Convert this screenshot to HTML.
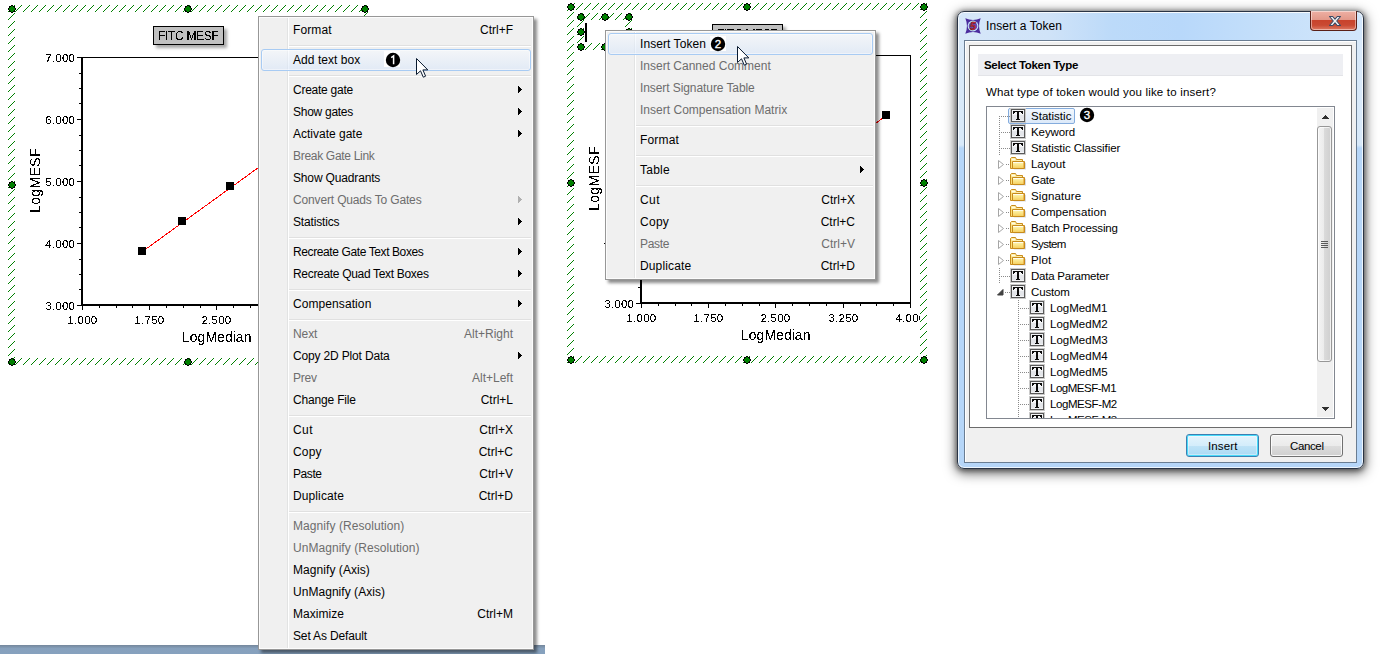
<!DOCTYPE html><html><head><meta charset="utf-8"><style>
html,body{margin:0;padding:0;}
body{width:1388px;height:654px;overflow:hidden;position:relative;background:#fff;font-family:'Liberation Sans', sans-serif;}
div{box-sizing:border-box;}
svg{position:absolute;left:0;top:0;overflow:visible;}
</style></head><body><svg width="1388" height="654"><defs><pattern id="h0" patternUnits="userSpaceOnUse" x="0" y="0" width="8" height="8"><g fill="#008000"><rect x="0" y="0" width="1" height="1"/><rect x="1" y="7" width="1" height="1"/><rect x="2" y="6" width="1" height="1"/><rect x="3" y="5" width="1" height="1"/><rect x="4" y="4" width="1" height="1"/><rect x="5" y="3" width="1" height="1"/><rect x="6" y="2" width="1" height="1"/><rect x="7" y="1" width="1" height="1"/></g></pattern><pattern id="h1" patternUnits="userSpaceOnUse" x="0" y="0" width="8" height="8"><g fill="#008000"><rect x="0" y="1" width="1" height="1"/><rect x="1" y="0" width="1" height="1"/><rect x="2" y="7" width="1" height="1"/><rect x="3" y="6" width="1" height="1"/><rect x="4" y="5" width="1" height="1"/><rect x="5" y="4" width="1" height="1"/><rect x="6" y="3" width="1" height="1"/><rect x="7" y="2" width="1" height="1"/></g></pattern><pattern id="h2" patternUnits="userSpaceOnUse" x="0" y="0" width="8" height="8"><g fill="#008000"><rect x="0" y="2" width="1" height="1"/><rect x="1" y="1" width="1" height="1"/><rect x="2" y="0" width="1" height="1"/><rect x="3" y="7" width="1" height="1"/><rect x="4" y="6" width="1" height="1"/><rect x="5" y="5" width="1" height="1"/><rect x="6" y="4" width="1" height="1"/><rect x="7" y="3" width="1" height="1"/></g></pattern><pattern id="h3" patternUnits="userSpaceOnUse" x="0" y="0" width="8" height="8"><g fill="#008000"><rect x="0" y="3" width="1" height="1"/><rect x="1" y="2" width="1" height="1"/><rect x="2" y="1" width="1" height="1"/><rect x="3" y="0" width="1" height="1"/><rect x="4" y="7" width="1" height="1"/><rect x="5" y="6" width="1" height="1"/><rect x="6" y="5" width="1" height="1"/><rect x="7" y="4" width="1" height="1"/></g></pattern><pattern id="h4" patternUnits="userSpaceOnUse" x="0" y="0" width="8" height="8"><g fill="#008000"><rect x="0" y="4" width="1" height="1"/><rect x="1" y="3" width="1" height="1"/><rect x="2" y="2" width="1" height="1"/><rect x="3" y="1" width="1" height="1"/><rect x="4" y="0" width="1" height="1"/><rect x="5" y="7" width="1" height="1"/><rect x="6" y="6" width="1" height="1"/><rect x="7" y="5" width="1" height="1"/></g></pattern><pattern id="h5" patternUnits="userSpaceOnUse" x="0" y="0" width="8" height="8"><g fill="#008000"><rect x="0" y="5" width="1" height="1"/><rect x="1" y="4" width="1" height="1"/><rect x="2" y="3" width="1" height="1"/><rect x="3" y="2" width="1" height="1"/><rect x="4" y="1" width="1" height="1"/><rect x="5" y="0" width="1" height="1"/><rect x="6" y="7" width="1" height="1"/><rect x="7" y="6" width="1" height="1"/></g></pattern><pattern id="h6" patternUnits="userSpaceOnUse" x="0" y="0" width="8" height="8"><g fill="#008000"><rect x="0" y="6" width="1" height="1"/><rect x="1" y="5" width="1" height="1"/><rect x="2" y="4" width="1" height="1"/><rect x="3" y="3" width="1" height="1"/><rect x="4" y="2" width="1" height="1"/><rect x="5" y="1" width="1" height="1"/><rect x="6" y="0" width="1" height="1"/><rect x="7" y="7" width="1" height="1"/></g></pattern><pattern id="h7" patternUnits="userSpaceOnUse" x="0" y="0" width="8" height="8"><g fill="#008000"><rect x="0" y="7" width="1" height="1"/><rect x="1" y="6" width="1" height="1"/><rect x="2" y="5" width="1" height="1"/><rect x="3" y="4" width="1" height="1"/><rect x="4" y="3" width="1" height="1"/><rect x="5" y="2" width="1" height="1"/><rect x="6" y="1" width="1" height="1"/><rect x="7" y="0" width="1" height="1"/></g></pattern></defs><clipPath id="cA"><rect x="15" y="12" width="346" height="346"/></clipPath><g clip-path="url(#cA)" shape-rendering="crispEdges"><rect x="81" y="57" width="271" height="1" fill="#000"/><rect x="351" y="57" width="1" height="249" fill="#000"/><rect x="81" y="57" width="2" height="249" fill="#000"/><rect x="81" y="304" width="271" height="2" fill="#000"/><rect x="77" y="57" width="4" height="1" fill="#000"/><rect x="79" y="73" width="2" height="1" fill="#000"/><rect x="79" y="88" width="2" height="1" fill="#000"/><rect x="79" y="103" width="2" height="1" fill="#000"/><rect x="77" y="119" width="4" height="1" fill="#000"/><rect x="79" y="135" width="2" height="1" fill="#000"/><rect x="79" y="150" width="2" height="1" fill="#000"/><rect x="79" y="165" width="2" height="1" fill="#000"/><rect x="77" y="181" width="4" height="1" fill="#000"/><rect x="79" y="197" width="2" height="1" fill="#000"/><rect x="79" y="212" width="2" height="1" fill="#000"/><rect x="79" y="227" width="2" height="1" fill="#000"/><rect x="77" y="243" width="4" height="1" fill="#000"/><rect x="79" y="259" width="2" height="1" fill="#000"/><rect x="79" y="274" width="2" height="1" fill="#000"/><rect x="79" y="289" width="2" height="1" fill="#000"/><rect x="77" y="305" width="4" height="1" fill="#000"/><rect x="82" y="306" width="1" height="4" fill="#000"/><rect x="99" y="306" width="1" height="2" fill="#000"/><rect x="116" y="306" width="1" height="2" fill="#000"/><rect x="132" y="306" width="1" height="2" fill="#000"/><rect x="149" y="306" width="1" height="4" fill="#000"/><rect x="166" y="306" width="1" height="2" fill="#000"/><rect x="183" y="306" width="1" height="2" fill="#000"/><rect x="200" y="306" width="1" height="2" fill="#000"/><rect x="216" y="306" width="1" height="4" fill="#000"/><rect x="233" y="306" width="1" height="2" fill="#000"/><rect x="250" y="306" width="1" height="2" fill="#000"/><rect x="267" y="306" width="1" height="2" fill="#000"/><rect x="284" y="306" width="1" height="4" fill="#000"/><rect x="301" y="306" width="1" height="2" fill="#000"/><rect x="317" y="306" width="1" height="2" fill="#000"/><rect x="334" y="306" width="1" height="2" fill="#000"/><rect x="351" y="306" width="1" height="4" fill="#000"/></g><g clip-path="url(#cA)"><line x1="142.5" y1="251.5" x2="327.5" y2="117.5" stroke="#ff0000" stroke-width="1" shape-rendering="crispEdges"/><rect x="138" y="247" width="8" height="8" fill="#000" shape-rendering="crispEdges"/><rect x="178" y="217" width="8" height="8" fill="#000" shape-rendering="crispEdges"/><rect x="226" y="182" width="8" height="8" fill="#000" shape-rendering="crispEdges"/><rect x="275" y="147" width="8" height="8" fill="#000" shape-rendering="crispEdges"/><rect x="323" y="113" width="8" height="8" fill="#000" shape-rendering="crispEdges"/></g><g shape-rendering="crispEdges"><rect x="8" y="5" width="7" height="360" fill="url(#h3)"/><rect x="361" y="5" width="7" height="360" fill="url(#h3)"/><rect x="15" y="5" width="346" height="7" fill="url(#h2)"/><rect x="15" y="358" width="346" height="7" fill="url(#h3)"/><path d="M11 5h1v1h-1zM12 5h1v1h-1zM9 6h1v1h-1zM10 6h1v1h-1zM13 6h1v1h-1zM14 6h1v1h-1zM9 7h1v1h-1zM14 7h1v1h-1zM8 8h1v1h-1zM15 8h1v1h-1zM8 9h1v1h-1zM15 9h1v1h-1zM9 10h1v1h-1zM14 10h1v1h-1zM9 11h1v1h-1zM10 11h1v1h-1zM13 11h1v1h-1zM14 11h1v1h-1zM11 12h1v1h-1zM12 12h1v1h-1z" fill="#000"/><path d="M11 6h1v1h-1zM12 6h1v1h-1zM10 7h1v1h-1zM11 7h1v1h-1zM12 7h1v1h-1zM13 7h1v1h-1zM9 8h1v1h-1zM10 8h1v1h-1zM11 8h1v1h-1zM12 8h1v1h-1zM13 8h1v1h-1zM14 8h1v1h-1zM9 9h1v1h-1zM10 9h1v1h-1zM11 9h1v1h-1zM12 9h1v1h-1zM13 9h1v1h-1zM14 9h1v1h-1zM10 10h1v1h-1zM11 10h1v1h-1zM12 10h1v1h-1zM13 10h1v1h-1zM11 11h1v1h-1zM12 11h1v1h-1z" fill="#008000"/><path d="M187 5h1v1h-1zM188 5h1v1h-1zM185 6h1v1h-1zM186 6h1v1h-1zM189 6h1v1h-1zM190 6h1v1h-1zM185 7h1v1h-1zM190 7h1v1h-1zM184 8h1v1h-1zM191 8h1v1h-1zM184 9h1v1h-1zM191 9h1v1h-1zM185 10h1v1h-1zM190 10h1v1h-1zM185 11h1v1h-1zM186 11h1v1h-1zM189 11h1v1h-1zM190 11h1v1h-1zM187 12h1v1h-1zM188 12h1v1h-1z" fill="#000"/><path d="M187 6h1v1h-1zM188 6h1v1h-1zM186 7h1v1h-1zM187 7h1v1h-1zM188 7h1v1h-1zM189 7h1v1h-1zM185 8h1v1h-1zM186 8h1v1h-1zM187 8h1v1h-1zM188 8h1v1h-1zM189 8h1v1h-1zM190 8h1v1h-1zM185 9h1v1h-1zM186 9h1v1h-1zM187 9h1v1h-1zM188 9h1v1h-1zM189 9h1v1h-1zM190 9h1v1h-1zM186 10h1v1h-1zM187 10h1v1h-1zM188 10h1v1h-1zM189 10h1v1h-1zM187 11h1v1h-1zM188 11h1v1h-1z" fill="#008000"/><path d="M364 5h1v1h-1zM365 5h1v1h-1zM362 6h1v1h-1zM363 6h1v1h-1zM366 6h1v1h-1zM367 6h1v1h-1zM362 7h1v1h-1zM367 7h1v1h-1zM361 8h1v1h-1zM368 8h1v1h-1zM361 9h1v1h-1zM368 9h1v1h-1zM362 10h1v1h-1zM367 10h1v1h-1zM362 11h1v1h-1zM363 11h1v1h-1zM366 11h1v1h-1zM367 11h1v1h-1zM364 12h1v1h-1zM365 12h1v1h-1z" fill="#000"/><path d="M364 6h1v1h-1zM365 6h1v1h-1zM363 7h1v1h-1zM364 7h1v1h-1zM365 7h1v1h-1zM366 7h1v1h-1zM362 8h1v1h-1zM363 8h1v1h-1zM364 8h1v1h-1zM365 8h1v1h-1zM366 8h1v1h-1zM367 8h1v1h-1zM362 9h1v1h-1zM363 9h1v1h-1zM364 9h1v1h-1zM365 9h1v1h-1zM366 9h1v1h-1zM367 9h1v1h-1zM363 10h1v1h-1zM364 10h1v1h-1zM365 10h1v1h-1zM366 10h1v1h-1zM364 11h1v1h-1zM365 11h1v1h-1z" fill="#008000"/><path d="M11 181h1v1h-1zM12 181h1v1h-1zM9 182h1v1h-1zM10 182h1v1h-1zM13 182h1v1h-1zM14 182h1v1h-1zM9 183h1v1h-1zM14 183h1v1h-1zM8 184h1v1h-1zM15 184h1v1h-1zM8 185h1v1h-1zM15 185h1v1h-1zM9 186h1v1h-1zM14 186h1v1h-1zM9 187h1v1h-1zM10 187h1v1h-1zM13 187h1v1h-1zM14 187h1v1h-1zM11 188h1v1h-1zM12 188h1v1h-1z" fill="#000"/><path d="M11 182h1v1h-1zM12 182h1v1h-1zM10 183h1v1h-1zM11 183h1v1h-1zM12 183h1v1h-1zM13 183h1v1h-1zM9 184h1v1h-1zM10 184h1v1h-1zM11 184h1v1h-1zM12 184h1v1h-1zM13 184h1v1h-1zM14 184h1v1h-1zM9 185h1v1h-1zM10 185h1v1h-1zM11 185h1v1h-1zM12 185h1v1h-1zM13 185h1v1h-1zM14 185h1v1h-1zM10 186h1v1h-1zM11 186h1v1h-1zM12 186h1v1h-1zM13 186h1v1h-1zM11 187h1v1h-1zM12 187h1v1h-1z" fill="#008000"/><path d="M364 181h1v1h-1zM365 181h1v1h-1zM362 182h1v1h-1zM363 182h1v1h-1zM366 182h1v1h-1zM367 182h1v1h-1zM362 183h1v1h-1zM367 183h1v1h-1zM361 184h1v1h-1zM368 184h1v1h-1zM361 185h1v1h-1zM368 185h1v1h-1zM362 186h1v1h-1zM367 186h1v1h-1zM362 187h1v1h-1zM363 187h1v1h-1zM366 187h1v1h-1zM367 187h1v1h-1zM364 188h1v1h-1zM365 188h1v1h-1z" fill="#000"/><path d="M364 182h1v1h-1zM365 182h1v1h-1zM363 183h1v1h-1zM364 183h1v1h-1zM365 183h1v1h-1zM366 183h1v1h-1zM362 184h1v1h-1zM363 184h1v1h-1zM364 184h1v1h-1zM365 184h1v1h-1zM366 184h1v1h-1zM367 184h1v1h-1zM362 185h1v1h-1zM363 185h1v1h-1zM364 185h1v1h-1zM365 185h1v1h-1zM366 185h1v1h-1zM367 185h1v1h-1zM363 186h1v1h-1zM364 186h1v1h-1zM365 186h1v1h-1zM366 186h1v1h-1zM364 187h1v1h-1zM365 187h1v1h-1z" fill="#008000"/><path d="M11 358h1v1h-1zM12 358h1v1h-1zM9 359h1v1h-1zM10 359h1v1h-1zM13 359h1v1h-1zM14 359h1v1h-1zM9 360h1v1h-1zM14 360h1v1h-1zM8 361h1v1h-1zM15 361h1v1h-1zM8 362h1v1h-1zM15 362h1v1h-1zM9 363h1v1h-1zM14 363h1v1h-1zM9 364h1v1h-1zM10 364h1v1h-1zM13 364h1v1h-1zM14 364h1v1h-1zM11 365h1v1h-1zM12 365h1v1h-1z" fill="#000"/><path d="M11 359h1v1h-1zM12 359h1v1h-1zM10 360h1v1h-1zM11 360h1v1h-1zM12 360h1v1h-1zM13 360h1v1h-1zM9 361h1v1h-1zM10 361h1v1h-1zM11 361h1v1h-1zM12 361h1v1h-1zM13 361h1v1h-1zM14 361h1v1h-1zM9 362h1v1h-1zM10 362h1v1h-1zM11 362h1v1h-1zM12 362h1v1h-1zM13 362h1v1h-1zM14 362h1v1h-1zM10 363h1v1h-1zM11 363h1v1h-1zM12 363h1v1h-1zM13 363h1v1h-1zM11 364h1v1h-1zM12 364h1v1h-1z" fill="#008000"/><path d="M187 358h1v1h-1zM188 358h1v1h-1zM185 359h1v1h-1zM186 359h1v1h-1zM189 359h1v1h-1zM190 359h1v1h-1zM185 360h1v1h-1zM190 360h1v1h-1zM184 361h1v1h-1zM191 361h1v1h-1zM184 362h1v1h-1zM191 362h1v1h-1zM185 363h1v1h-1zM190 363h1v1h-1zM185 364h1v1h-1zM186 364h1v1h-1zM189 364h1v1h-1zM190 364h1v1h-1zM187 365h1v1h-1zM188 365h1v1h-1z" fill="#000"/><path d="M187 359h1v1h-1zM188 359h1v1h-1zM186 360h1v1h-1zM187 360h1v1h-1zM188 360h1v1h-1zM189 360h1v1h-1zM185 361h1v1h-1zM186 361h1v1h-1zM187 361h1v1h-1zM188 361h1v1h-1zM189 361h1v1h-1zM190 361h1v1h-1zM185 362h1v1h-1zM186 362h1v1h-1zM187 362h1v1h-1zM188 362h1v1h-1zM189 362h1v1h-1zM190 362h1v1h-1zM186 363h1v1h-1zM187 363h1v1h-1zM188 363h1v1h-1zM189 363h1v1h-1zM187 364h1v1h-1zM188 364h1v1h-1z" fill="#008000"/><path d="M364 358h1v1h-1zM365 358h1v1h-1zM362 359h1v1h-1zM363 359h1v1h-1zM366 359h1v1h-1zM367 359h1v1h-1zM362 360h1v1h-1zM367 360h1v1h-1zM361 361h1v1h-1zM368 361h1v1h-1zM361 362h1v1h-1zM368 362h1v1h-1zM362 363h1v1h-1zM367 363h1v1h-1zM362 364h1v1h-1zM363 364h1v1h-1zM366 364h1v1h-1zM367 364h1v1h-1zM364 365h1v1h-1zM365 365h1v1h-1z" fill="#000"/><path d="M364 359h1v1h-1zM365 359h1v1h-1zM363 360h1v1h-1zM364 360h1v1h-1zM365 360h1v1h-1zM366 360h1v1h-1zM362 361h1v1h-1zM363 361h1v1h-1zM364 361h1v1h-1zM365 361h1v1h-1zM366 361h1v1h-1zM367 361h1v1h-1zM362 362h1v1h-1zM363 362h1v1h-1zM364 362h1v1h-1zM365 362h1v1h-1zM366 362h1v1h-1zM367 362h1v1h-1zM363 363h1v1h-1zM364 363h1v1h-1zM365 363h1v1h-1zM366 363h1v1h-1zM364 364h1v1h-1zM365 364h1v1h-1z" fill="#008000"/></g><clipPath id="cB"><rect x="574" y="10" width="346" height="346"/></clipPath><g clip-path="url(#cB)" shape-rendering="crispEdges"><rect x="640" y="55" width="271" height="1" fill="#000"/><rect x="910" y="55" width="1" height="249" fill="#000"/><rect x="640" y="55" width="2" height="249" fill="#000"/><rect x="640" y="302" width="271" height="2" fill="#000"/><rect x="636" y="55" width="4" height="1" fill="#000"/><rect x="638" y="71" width="2" height="1" fill="#000"/><rect x="638" y="86" width="2" height="1" fill="#000"/><rect x="638" y="101" width="2" height="1" fill="#000"/><rect x="636" y="117" width="4" height="1" fill="#000"/><rect x="638" y="133" width="2" height="1" fill="#000"/><rect x="638" y="148" width="2" height="1" fill="#000"/><rect x="638" y="163" width="2" height="1" fill="#000"/><rect x="636" y="179" width="4" height="1" fill="#000"/><rect x="638" y="195" width="2" height="1" fill="#000"/><rect x="638" y="210" width="2" height="1" fill="#000"/><rect x="638" y="225" width="2" height="1" fill="#000"/><rect x="636" y="241" width="4" height="1" fill="#000"/><rect x="638" y="257" width="2" height="1" fill="#000"/><rect x="638" y="272" width="2" height="1" fill="#000"/><rect x="638" y="287" width="2" height="1" fill="#000"/><rect x="636" y="303" width="4" height="1" fill="#000"/><rect x="641" y="304" width="1" height="4" fill="#000"/><rect x="658" y="304" width="1" height="2" fill="#000"/><rect x="675" y="304" width="1" height="2" fill="#000"/><rect x="691" y="304" width="1" height="2" fill="#000"/><rect x="708" y="304" width="1" height="4" fill="#000"/><rect x="725" y="304" width="1" height="2" fill="#000"/><rect x="742" y="304" width="1" height="2" fill="#000"/><rect x="759" y="304" width="1" height="2" fill="#000"/><rect x="775" y="304" width="1" height="4" fill="#000"/><rect x="792" y="304" width="1" height="2" fill="#000"/><rect x="809" y="304" width="1" height="2" fill="#000"/><rect x="826" y="304" width="1" height="2" fill="#000"/><rect x="843" y="304" width="1" height="4" fill="#000"/><rect x="860" y="304" width="1" height="2" fill="#000"/><rect x="876" y="304" width="1" height="2" fill="#000"/><rect x="893" y="304" width="1" height="2" fill="#000"/><rect x="910" y="304" width="1" height="4" fill="#000"/></g><g clip-path="url(#cB)"><line x1="701.5" y1="249.5" x2="886.5" y2="115.5" stroke="#ff0000" stroke-width="1" shape-rendering="crispEdges"/><rect x="697" y="245" width="8" height="8" fill="#000" shape-rendering="crispEdges"/><rect x="737" y="215" width="8" height="8" fill="#000" shape-rendering="crispEdges"/><rect x="785" y="180" width="8" height="8" fill="#000" shape-rendering="crispEdges"/><rect x="834" y="145" width="8" height="8" fill="#000" shape-rendering="crispEdges"/><rect x="882" y="111" width="8" height="8" fill="#000" shape-rendering="crispEdges"/></g><g shape-rendering="crispEdges"><rect x="567" y="3" width="7" height="360" fill="url(#h1)"/><rect x="920" y="3" width="7" height="360" fill="url(#h1)"/><rect x="574" y="3" width="346" height="7" fill="url(#h1)"/><rect x="574" y="356" width="346" height="7" fill="url(#h1)"/><path d="M570 3h1v1h-1zM571 3h1v1h-1zM568 4h1v1h-1zM569 4h1v1h-1zM572 4h1v1h-1zM573 4h1v1h-1zM568 5h1v1h-1zM573 5h1v1h-1zM567 6h1v1h-1zM574 6h1v1h-1zM567 7h1v1h-1zM574 7h1v1h-1zM568 8h1v1h-1zM573 8h1v1h-1zM568 9h1v1h-1zM569 9h1v1h-1zM572 9h1v1h-1zM573 9h1v1h-1zM570 10h1v1h-1zM571 10h1v1h-1z" fill="#000"/><path d="M570 4h1v1h-1zM571 4h1v1h-1zM569 5h1v1h-1zM570 5h1v1h-1zM571 5h1v1h-1zM572 5h1v1h-1zM568 6h1v1h-1zM569 6h1v1h-1zM570 6h1v1h-1zM571 6h1v1h-1zM572 6h1v1h-1zM573 6h1v1h-1zM568 7h1v1h-1zM569 7h1v1h-1zM570 7h1v1h-1zM571 7h1v1h-1zM572 7h1v1h-1zM573 7h1v1h-1zM569 8h1v1h-1zM570 8h1v1h-1zM571 8h1v1h-1zM572 8h1v1h-1zM570 9h1v1h-1zM571 9h1v1h-1z" fill="#008000"/><path d="M746 3h1v1h-1zM747 3h1v1h-1zM744 4h1v1h-1zM745 4h1v1h-1zM748 4h1v1h-1zM749 4h1v1h-1zM744 5h1v1h-1zM749 5h1v1h-1zM743 6h1v1h-1zM750 6h1v1h-1zM743 7h1v1h-1zM750 7h1v1h-1zM744 8h1v1h-1zM749 8h1v1h-1zM744 9h1v1h-1zM745 9h1v1h-1zM748 9h1v1h-1zM749 9h1v1h-1zM746 10h1v1h-1zM747 10h1v1h-1z" fill="#000"/><path d="M746 4h1v1h-1zM747 4h1v1h-1zM745 5h1v1h-1zM746 5h1v1h-1zM747 5h1v1h-1zM748 5h1v1h-1zM744 6h1v1h-1zM745 6h1v1h-1zM746 6h1v1h-1zM747 6h1v1h-1zM748 6h1v1h-1zM749 6h1v1h-1zM744 7h1v1h-1zM745 7h1v1h-1zM746 7h1v1h-1zM747 7h1v1h-1zM748 7h1v1h-1zM749 7h1v1h-1zM745 8h1v1h-1zM746 8h1v1h-1zM747 8h1v1h-1zM748 8h1v1h-1zM746 9h1v1h-1zM747 9h1v1h-1z" fill="#008000"/><path d="M923 3h1v1h-1zM924 3h1v1h-1zM921 4h1v1h-1zM922 4h1v1h-1zM925 4h1v1h-1zM926 4h1v1h-1zM921 5h1v1h-1zM926 5h1v1h-1zM920 6h1v1h-1zM927 6h1v1h-1zM920 7h1v1h-1zM927 7h1v1h-1zM921 8h1v1h-1zM926 8h1v1h-1zM921 9h1v1h-1zM922 9h1v1h-1zM925 9h1v1h-1zM926 9h1v1h-1zM923 10h1v1h-1zM924 10h1v1h-1z" fill="#000"/><path d="M923 4h1v1h-1zM924 4h1v1h-1zM922 5h1v1h-1zM923 5h1v1h-1zM924 5h1v1h-1zM925 5h1v1h-1zM921 6h1v1h-1zM922 6h1v1h-1zM923 6h1v1h-1zM924 6h1v1h-1zM925 6h1v1h-1zM926 6h1v1h-1zM921 7h1v1h-1zM922 7h1v1h-1zM923 7h1v1h-1zM924 7h1v1h-1zM925 7h1v1h-1zM926 7h1v1h-1zM922 8h1v1h-1zM923 8h1v1h-1zM924 8h1v1h-1zM925 8h1v1h-1zM923 9h1v1h-1zM924 9h1v1h-1z" fill="#008000"/><path d="M570 179h1v1h-1zM571 179h1v1h-1zM568 180h1v1h-1zM569 180h1v1h-1zM572 180h1v1h-1zM573 180h1v1h-1zM568 181h1v1h-1zM573 181h1v1h-1zM567 182h1v1h-1zM574 182h1v1h-1zM567 183h1v1h-1zM574 183h1v1h-1zM568 184h1v1h-1zM573 184h1v1h-1zM568 185h1v1h-1zM569 185h1v1h-1zM572 185h1v1h-1zM573 185h1v1h-1zM570 186h1v1h-1zM571 186h1v1h-1z" fill="#000"/><path d="M570 180h1v1h-1zM571 180h1v1h-1zM569 181h1v1h-1zM570 181h1v1h-1zM571 181h1v1h-1zM572 181h1v1h-1zM568 182h1v1h-1zM569 182h1v1h-1zM570 182h1v1h-1zM571 182h1v1h-1zM572 182h1v1h-1zM573 182h1v1h-1zM568 183h1v1h-1zM569 183h1v1h-1zM570 183h1v1h-1zM571 183h1v1h-1zM572 183h1v1h-1zM573 183h1v1h-1zM569 184h1v1h-1zM570 184h1v1h-1zM571 184h1v1h-1zM572 184h1v1h-1zM570 185h1v1h-1zM571 185h1v1h-1z" fill="#008000"/><path d="M923 179h1v1h-1zM924 179h1v1h-1zM921 180h1v1h-1zM922 180h1v1h-1zM925 180h1v1h-1zM926 180h1v1h-1zM921 181h1v1h-1zM926 181h1v1h-1zM920 182h1v1h-1zM927 182h1v1h-1zM920 183h1v1h-1zM927 183h1v1h-1zM921 184h1v1h-1zM926 184h1v1h-1zM921 185h1v1h-1zM922 185h1v1h-1zM925 185h1v1h-1zM926 185h1v1h-1zM923 186h1v1h-1zM924 186h1v1h-1z" fill="#000"/><path d="M923 180h1v1h-1zM924 180h1v1h-1zM922 181h1v1h-1zM923 181h1v1h-1zM924 181h1v1h-1zM925 181h1v1h-1zM921 182h1v1h-1zM922 182h1v1h-1zM923 182h1v1h-1zM924 182h1v1h-1zM925 182h1v1h-1zM926 182h1v1h-1zM921 183h1v1h-1zM922 183h1v1h-1zM923 183h1v1h-1zM924 183h1v1h-1zM925 183h1v1h-1zM926 183h1v1h-1zM922 184h1v1h-1zM923 184h1v1h-1zM924 184h1v1h-1zM925 184h1v1h-1zM923 185h1v1h-1zM924 185h1v1h-1z" fill="#008000"/><path d="M570 356h1v1h-1zM571 356h1v1h-1zM568 357h1v1h-1zM569 357h1v1h-1zM572 357h1v1h-1zM573 357h1v1h-1zM568 358h1v1h-1zM573 358h1v1h-1zM567 359h1v1h-1zM574 359h1v1h-1zM567 360h1v1h-1zM574 360h1v1h-1zM568 361h1v1h-1zM573 361h1v1h-1zM568 362h1v1h-1zM569 362h1v1h-1zM572 362h1v1h-1zM573 362h1v1h-1zM570 363h1v1h-1zM571 363h1v1h-1z" fill="#000"/><path d="M570 357h1v1h-1zM571 357h1v1h-1zM569 358h1v1h-1zM570 358h1v1h-1zM571 358h1v1h-1zM572 358h1v1h-1zM568 359h1v1h-1zM569 359h1v1h-1zM570 359h1v1h-1zM571 359h1v1h-1zM572 359h1v1h-1zM573 359h1v1h-1zM568 360h1v1h-1zM569 360h1v1h-1zM570 360h1v1h-1zM571 360h1v1h-1zM572 360h1v1h-1zM573 360h1v1h-1zM569 361h1v1h-1zM570 361h1v1h-1zM571 361h1v1h-1zM572 361h1v1h-1zM570 362h1v1h-1zM571 362h1v1h-1z" fill="#008000"/><path d="M746 356h1v1h-1zM747 356h1v1h-1zM744 357h1v1h-1zM745 357h1v1h-1zM748 357h1v1h-1zM749 357h1v1h-1zM744 358h1v1h-1zM749 358h1v1h-1zM743 359h1v1h-1zM750 359h1v1h-1zM743 360h1v1h-1zM750 360h1v1h-1zM744 361h1v1h-1zM749 361h1v1h-1zM744 362h1v1h-1zM745 362h1v1h-1zM748 362h1v1h-1zM749 362h1v1h-1zM746 363h1v1h-1zM747 363h1v1h-1z" fill="#000"/><path d="M746 357h1v1h-1zM747 357h1v1h-1zM745 358h1v1h-1zM746 358h1v1h-1zM747 358h1v1h-1zM748 358h1v1h-1zM744 359h1v1h-1zM745 359h1v1h-1zM746 359h1v1h-1zM747 359h1v1h-1zM748 359h1v1h-1zM749 359h1v1h-1zM744 360h1v1h-1zM745 360h1v1h-1zM746 360h1v1h-1zM747 360h1v1h-1zM748 360h1v1h-1zM749 360h1v1h-1zM745 361h1v1h-1zM746 361h1v1h-1zM747 361h1v1h-1zM748 361h1v1h-1zM746 362h1v1h-1zM747 362h1v1h-1z" fill="#008000"/><path d="M923 356h1v1h-1zM924 356h1v1h-1zM921 357h1v1h-1zM922 357h1v1h-1zM925 357h1v1h-1zM926 357h1v1h-1zM921 358h1v1h-1zM926 358h1v1h-1zM920 359h1v1h-1zM927 359h1v1h-1zM920 360h1v1h-1zM927 360h1v1h-1zM921 361h1v1h-1zM926 361h1v1h-1zM921 362h1v1h-1zM922 362h1v1h-1zM925 362h1v1h-1zM926 362h1v1h-1zM923 363h1v1h-1zM924 363h1v1h-1z" fill="#000"/><path d="M923 357h1v1h-1zM924 357h1v1h-1zM922 358h1v1h-1zM923 358h1v1h-1zM924 358h1v1h-1zM925 358h1v1h-1zM921 359h1v1h-1zM922 359h1v1h-1zM923 359h1v1h-1zM924 359h1v1h-1zM925 359h1v1h-1zM926 359h1v1h-1zM921 360h1v1h-1zM922 360h1v1h-1zM923 360h1v1h-1zM924 360h1v1h-1zM925 360h1v1h-1zM926 360h1v1h-1zM922 361h1v1h-1zM923 361h1v1h-1zM924 361h1v1h-1zM925 361h1v1h-1zM923 362h1v1h-1zM924 362h1v1h-1z" fill="#008000"/></g><g shape-rendering="crispEdges"><rect x="577" y="13" width="7" height="37" fill="url(#h3)"/><rect x="625" y="13" width="7" height="37" fill="url(#h3)"/><rect x="584" y="13" width="41" height="7" fill="url(#h2)"/><rect x="584" y="43" width="41" height="7" fill="url(#h2)"/><path d="M580 13h1v1h-1zM581 13h1v1h-1zM578 14h1v1h-1zM579 14h1v1h-1zM582 14h1v1h-1zM583 14h1v1h-1zM578 15h1v1h-1zM583 15h1v1h-1zM577 16h1v1h-1zM584 16h1v1h-1zM577 17h1v1h-1zM584 17h1v1h-1zM578 18h1v1h-1zM583 18h1v1h-1zM578 19h1v1h-1zM579 19h1v1h-1zM582 19h1v1h-1zM583 19h1v1h-1zM580 20h1v1h-1zM581 20h1v1h-1z" fill="#000"/><path d="M580 14h1v1h-1zM581 14h1v1h-1zM579 15h1v1h-1zM580 15h1v1h-1zM581 15h1v1h-1zM582 15h1v1h-1zM578 16h1v1h-1zM579 16h1v1h-1zM580 16h1v1h-1zM581 16h1v1h-1zM582 16h1v1h-1zM583 16h1v1h-1zM578 17h1v1h-1zM579 17h1v1h-1zM580 17h1v1h-1zM581 17h1v1h-1zM582 17h1v1h-1zM583 17h1v1h-1zM579 18h1v1h-1zM580 18h1v1h-1zM581 18h1v1h-1zM582 18h1v1h-1zM580 19h1v1h-1zM581 19h1v1h-1z" fill="#008000"/><path d="M604 13h1v1h-1zM605 13h1v1h-1zM602 14h1v1h-1zM603 14h1v1h-1zM606 14h1v1h-1zM607 14h1v1h-1zM602 15h1v1h-1zM607 15h1v1h-1zM601 16h1v1h-1zM608 16h1v1h-1zM601 17h1v1h-1zM608 17h1v1h-1zM602 18h1v1h-1zM607 18h1v1h-1zM602 19h1v1h-1zM603 19h1v1h-1zM606 19h1v1h-1zM607 19h1v1h-1zM604 20h1v1h-1zM605 20h1v1h-1z" fill="#000"/><path d="M604 14h1v1h-1zM605 14h1v1h-1zM603 15h1v1h-1zM604 15h1v1h-1zM605 15h1v1h-1zM606 15h1v1h-1zM602 16h1v1h-1zM603 16h1v1h-1zM604 16h1v1h-1zM605 16h1v1h-1zM606 16h1v1h-1zM607 16h1v1h-1zM602 17h1v1h-1zM603 17h1v1h-1zM604 17h1v1h-1zM605 17h1v1h-1zM606 17h1v1h-1zM607 17h1v1h-1zM603 18h1v1h-1zM604 18h1v1h-1zM605 18h1v1h-1zM606 18h1v1h-1zM604 19h1v1h-1zM605 19h1v1h-1z" fill="#008000"/><path d="M628 13h1v1h-1zM629 13h1v1h-1zM626 14h1v1h-1zM627 14h1v1h-1zM630 14h1v1h-1zM631 14h1v1h-1zM626 15h1v1h-1zM631 15h1v1h-1zM625 16h1v1h-1zM632 16h1v1h-1zM625 17h1v1h-1zM632 17h1v1h-1zM626 18h1v1h-1zM631 18h1v1h-1zM626 19h1v1h-1zM627 19h1v1h-1zM630 19h1v1h-1zM631 19h1v1h-1zM628 20h1v1h-1zM629 20h1v1h-1z" fill="#000"/><path d="M628 14h1v1h-1zM629 14h1v1h-1zM627 15h1v1h-1zM628 15h1v1h-1zM629 15h1v1h-1zM630 15h1v1h-1zM626 16h1v1h-1zM627 16h1v1h-1zM628 16h1v1h-1zM629 16h1v1h-1zM630 16h1v1h-1zM631 16h1v1h-1zM626 17h1v1h-1zM627 17h1v1h-1zM628 17h1v1h-1zM629 17h1v1h-1zM630 17h1v1h-1zM631 17h1v1h-1zM627 18h1v1h-1zM628 18h1v1h-1zM629 18h1v1h-1zM630 18h1v1h-1zM628 19h1v1h-1zM629 19h1v1h-1z" fill="#008000"/><path d="M580 28h1v1h-1zM581 28h1v1h-1zM578 29h1v1h-1zM579 29h1v1h-1zM582 29h1v1h-1zM583 29h1v1h-1zM578 30h1v1h-1zM583 30h1v1h-1zM577 31h1v1h-1zM584 31h1v1h-1zM577 32h1v1h-1zM584 32h1v1h-1zM578 33h1v1h-1zM583 33h1v1h-1zM578 34h1v1h-1zM579 34h1v1h-1zM582 34h1v1h-1zM583 34h1v1h-1zM580 35h1v1h-1zM581 35h1v1h-1z" fill="#000"/><path d="M580 29h1v1h-1zM581 29h1v1h-1zM579 30h1v1h-1zM580 30h1v1h-1zM581 30h1v1h-1zM582 30h1v1h-1zM578 31h1v1h-1zM579 31h1v1h-1zM580 31h1v1h-1zM581 31h1v1h-1zM582 31h1v1h-1zM583 31h1v1h-1zM578 32h1v1h-1zM579 32h1v1h-1zM580 32h1v1h-1zM581 32h1v1h-1zM582 32h1v1h-1zM583 32h1v1h-1zM579 33h1v1h-1zM580 33h1v1h-1zM581 33h1v1h-1zM582 33h1v1h-1zM580 34h1v1h-1zM581 34h1v1h-1z" fill="#008000"/><path d="M628 28h1v1h-1zM629 28h1v1h-1zM626 29h1v1h-1zM627 29h1v1h-1zM630 29h1v1h-1zM631 29h1v1h-1zM626 30h1v1h-1zM631 30h1v1h-1zM625 31h1v1h-1zM632 31h1v1h-1zM625 32h1v1h-1zM632 32h1v1h-1zM626 33h1v1h-1zM631 33h1v1h-1zM626 34h1v1h-1zM627 34h1v1h-1zM630 34h1v1h-1zM631 34h1v1h-1zM628 35h1v1h-1zM629 35h1v1h-1z" fill="#000"/><path d="M628 29h1v1h-1zM629 29h1v1h-1zM627 30h1v1h-1zM628 30h1v1h-1zM629 30h1v1h-1zM630 30h1v1h-1zM626 31h1v1h-1zM627 31h1v1h-1zM628 31h1v1h-1zM629 31h1v1h-1zM630 31h1v1h-1zM631 31h1v1h-1zM626 32h1v1h-1zM627 32h1v1h-1zM628 32h1v1h-1zM629 32h1v1h-1zM630 32h1v1h-1zM631 32h1v1h-1zM627 33h1v1h-1zM628 33h1v1h-1zM629 33h1v1h-1zM630 33h1v1h-1zM628 34h1v1h-1zM629 34h1v1h-1z" fill="#008000"/><path d="M580 43h1v1h-1zM581 43h1v1h-1zM578 44h1v1h-1zM579 44h1v1h-1zM582 44h1v1h-1zM583 44h1v1h-1zM578 45h1v1h-1zM583 45h1v1h-1zM577 46h1v1h-1zM584 46h1v1h-1zM577 47h1v1h-1zM584 47h1v1h-1zM578 48h1v1h-1zM583 48h1v1h-1zM578 49h1v1h-1zM579 49h1v1h-1zM582 49h1v1h-1zM583 49h1v1h-1zM580 50h1v1h-1zM581 50h1v1h-1z" fill="#000"/><path d="M580 44h1v1h-1zM581 44h1v1h-1zM579 45h1v1h-1zM580 45h1v1h-1zM581 45h1v1h-1zM582 45h1v1h-1zM578 46h1v1h-1zM579 46h1v1h-1zM580 46h1v1h-1zM581 46h1v1h-1zM582 46h1v1h-1zM583 46h1v1h-1zM578 47h1v1h-1zM579 47h1v1h-1zM580 47h1v1h-1zM581 47h1v1h-1zM582 47h1v1h-1zM583 47h1v1h-1zM579 48h1v1h-1zM580 48h1v1h-1zM581 48h1v1h-1zM582 48h1v1h-1zM580 49h1v1h-1zM581 49h1v1h-1z" fill="#008000"/><path d="M604 43h1v1h-1zM605 43h1v1h-1zM602 44h1v1h-1zM603 44h1v1h-1zM606 44h1v1h-1zM607 44h1v1h-1zM602 45h1v1h-1zM607 45h1v1h-1zM601 46h1v1h-1zM608 46h1v1h-1zM601 47h1v1h-1zM608 47h1v1h-1zM602 48h1v1h-1zM607 48h1v1h-1zM602 49h1v1h-1zM603 49h1v1h-1zM606 49h1v1h-1zM607 49h1v1h-1zM604 50h1v1h-1zM605 50h1v1h-1z" fill="#000"/><path d="M604 44h1v1h-1zM605 44h1v1h-1zM603 45h1v1h-1zM604 45h1v1h-1zM605 45h1v1h-1zM606 45h1v1h-1zM602 46h1v1h-1zM603 46h1v1h-1zM604 46h1v1h-1zM605 46h1v1h-1zM606 46h1v1h-1zM607 46h1v1h-1zM602 47h1v1h-1zM603 47h1v1h-1zM604 47h1v1h-1zM605 47h1v1h-1zM606 47h1v1h-1zM607 47h1v1h-1zM603 48h1v1h-1zM604 48h1v1h-1zM605 48h1v1h-1zM606 48h1v1h-1zM604 49h1v1h-1zM605 49h1v1h-1z" fill="#008000"/><path d="M628 43h1v1h-1zM629 43h1v1h-1zM626 44h1v1h-1zM627 44h1v1h-1zM630 44h1v1h-1zM631 44h1v1h-1zM626 45h1v1h-1zM631 45h1v1h-1zM625 46h1v1h-1zM632 46h1v1h-1zM625 47h1v1h-1zM632 47h1v1h-1zM626 48h1v1h-1zM631 48h1v1h-1zM626 49h1v1h-1zM627 49h1v1h-1zM630 49h1v1h-1zM631 49h1v1h-1zM628 50h1v1h-1zM629 50h1v1h-1z" fill="#000"/><path d="M628 44h1v1h-1zM629 44h1v1h-1zM627 45h1v1h-1zM628 45h1v1h-1zM629 45h1v1h-1zM630 45h1v1h-1zM626 46h1v1h-1zM627 46h1v1h-1zM628 46h1v1h-1zM629 46h1v1h-1zM630 46h1v1h-1zM631 46h1v1h-1zM626 47h1v1h-1zM627 47h1v1h-1zM628 47h1v1h-1zM629 47h1v1h-1zM630 47h1v1h-1zM631 47h1v1h-1zM627 48h1v1h-1zM628 48h1v1h-1zM629 48h1v1h-1zM630 48h1v1h-1zM628 49h1v1h-1zM629 49h1v1h-1z" fill="#008000"/></g><rect x="585" y="23" width="2" height="19" fill="#000" shape-rendering="crispEdges"/></svg><svg width="0" height="0" style="position:absolute"><defs><filter id="noaa" x="0" y="0" width="100%" height="100%" color-interpolation-filters="sRGB"><feComponentTransfer><feFuncA type="discrete" tableValues="0 0 0 0 0 0 0 0 0 1 1 1 1 1 1 1 1 1 1 1"/></feComponentTransfer></filter></defs></svg><div style="position:absolute;left:153px;top:26px;width:71px;height:19px;background:#c0c0c0;border:1px solid #000;box-shadow:3px 3px 3px rgba(0,0,0,0.35)"></div><div style="position:absolute;left:0;top:0;width:1388px;height:654px;filter:url(#noaa)"><div style="position:absolute;top:30px;font-size:12px;line-height:12px;color:#000;white-space:pre;letter-spacing:-0.314px;left:158px;">FITC MESF</div></div><div style="position:absolute;left:15px;top:12px;width:346px;height:346px;overflow:hidden;filter:url(#noaa)"><div style="position:absolute;top:41px;font-size:11.5px;line-height:11.5px;color:#000;white-space:pre;letter-spacing:0.244px;right:285.76px;text-align:right;">7.000</div><div style="position:absolute;top:103px;font-size:11.5px;line-height:11.5px;color:#000;white-space:pre;letter-spacing:0.244px;right:285.76px;text-align:right;">6.000</div><div style="position:absolute;top:165px;font-size:11.5px;line-height:11.5px;color:#000;white-space:pre;letter-spacing:0.244px;right:285.76px;text-align:right;">5.000</div><div style="position:absolute;top:227px;font-size:11.5px;line-height:11.5px;color:#000;white-space:pre;letter-spacing:0.244px;right:285.76px;text-align:right;">4.000</div><div style="position:absolute;top:289px;font-size:11.5px;line-height:11.5px;color:#000;white-space:pre;letter-spacing:0.244px;right:285.76px;text-align:right;">3.000</div><div style="position:absolute;top:303px;font-size:11.5px;line-height:11.5px;color:#000;white-space:pre;letter-spacing:0.244px;left:52.5px;">1.000</div><div style="position:absolute;top:303px;font-size:11.5px;line-height:11.5px;color:#000;white-space:pre;letter-spacing:0.244px;left:119.5px;">1.750</div><div style="position:absolute;top:303px;font-size:11.5px;line-height:11.5px;color:#000;white-space:pre;letter-spacing:0.244px;left:186.5px;">2.500</div><div style="position:absolute;top:303px;font-size:11.5px;line-height:11.5px;color:#000;white-space:pre;letter-spacing:0.244px;left:254.5px;">3.250</div><div style="position:absolute;top:303px;font-size:11.5px;line-height:11.5px;color:#000;white-space:pre;letter-spacing:0.244px;left:321.5px;">4.000</div><div style="position:absolute;top:318px;font-size:14px;line-height:14px;color:#000;white-space:pre;letter-spacing:0.024px;left:167px;">LogMedian</div><div style="position:absolute;top:201px;font-size:14px;line-height:14px;color:#000;white-space:pre;letter-spacing:0.393px;left:13px;transform:rotate(-90deg);transform-origin:0 0;">LogMESF</div></div><div style="position:absolute;left:712px;top:24px;width:71px;height:19px;background:#c0c0c0;border:1px solid #000;box-shadow:3px 3px 3px rgba(0,0,0,0.35)"></div><div style="position:absolute;left:0;top:0;width:1388px;height:654px;filter:url(#noaa)"><div style="position:absolute;top:28px;font-size:12px;line-height:12px;color:#000;white-space:pre;letter-spacing:-0.314px;left:717px;">FITC MESF</div></div><div style="position:absolute;left:574px;top:10px;width:346px;height:346px;overflow:hidden;filter:url(#noaa)"><div style="position:absolute;top:41px;font-size:11.5px;line-height:11.5px;color:#000;white-space:pre;letter-spacing:0.244px;right:285.76px;text-align:right;">7.000</div><div style="position:absolute;top:103px;font-size:11.5px;line-height:11.5px;color:#000;white-space:pre;letter-spacing:0.244px;right:285.76px;text-align:right;">6.000</div><div style="position:absolute;top:165px;font-size:11.5px;line-height:11.5px;color:#000;white-space:pre;letter-spacing:0.244px;right:285.76px;text-align:right;">5.000</div><div style="position:absolute;top:227px;font-size:11.5px;line-height:11.5px;color:#000;white-space:pre;letter-spacing:0.244px;right:285.76px;text-align:right;">4.000</div><div style="position:absolute;top:289px;font-size:11.5px;line-height:11.5px;color:#000;white-space:pre;letter-spacing:0.244px;right:285.76px;text-align:right;">3.000</div><div style="position:absolute;top:303px;font-size:11.5px;line-height:11.5px;color:#000;white-space:pre;letter-spacing:0.244px;left:52.5px;">1.000</div><div style="position:absolute;top:303px;font-size:11.5px;line-height:11.5px;color:#000;white-space:pre;letter-spacing:0.244px;left:119.5px;">1.750</div><div style="position:absolute;top:303px;font-size:11.5px;line-height:11.5px;color:#000;white-space:pre;letter-spacing:0.244px;left:186.5px;">2.500</div><div style="position:absolute;top:303px;font-size:11.5px;line-height:11.5px;color:#000;white-space:pre;letter-spacing:0.244px;left:254.5px;">3.250</div><div style="position:absolute;top:303px;font-size:11.5px;line-height:11.5px;color:#000;white-space:pre;letter-spacing:0.244px;left:321.5px;">4.000</div><div style="position:absolute;top:318px;font-size:14px;line-height:14px;color:#000;white-space:pre;letter-spacing:0.024px;left:167px;">LogMedian</div><div style="position:absolute;top:201px;font-size:14px;line-height:14px;color:#000;white-space:pre;letter-spacing:0.393px;left:13px;transform:rotate(-90deg);transform-origin:0 0;">LogMESF</div></div><div style="position:absolute;left:0;top:645px;width:545px;height:9px;background:linear-gradient(#74869b,#87a1bd 40%,#86a1be)"></div><div style="position:absolute;left:258px;top:16px;width:276px;height:634px;background:#f0f0f0;border:1px solid #979797;box-shadow:inset 0 0 0 1px #fcfcfc, 3px 3px 3px rgba(0,0,0,0.45)"></div><div style="position:absolute;left:287px;top:18px;width:1px;height:630px;background:#e2e3e3"></div><div style="position:absolute;left:288px;top:18px;width:1px;height:630px;background:#fff"></div><div style="position:absolute;top:24px;font-size:12px;line-height:12px;color:#000;white-space:pre;letter-spacing:0.097px;left:293px;">Format</div><div style="position:absolute;top:24px;font-size:12px;line-height:12px;color:#000;white-space:pre;right:875.00px;text-align:right;">Ctrl+F</div><div style="position:absolute;left:289px;top:45px;width:242px;height:1px;background:#e0e0e0"></div><div style="position:absolute;left:289px;top:46px;width:242px;height:1px;background:#fff"></div><div style="position:absolute;left:261px;top:49px;width:270px;height:22px;border:1px solid #a8cbf3;border-radius:3px;background:linear-gradient(rgba(246,250,255,0.55),rgba(214,229,250,0.55));box-shadow:inset 0 0 0 1px rgba(255,255,255,0.45)"></div><div style="position:absolute;top:54px;font-size:12px;line-height:12px;color:#000;white-space:pre;letter-spacing:0.057px;left:293px;">Add text box</div><div style="position:absolute;left:289px;top:75px;width:242px;height:1px;background:#e0e0e0"></div><div style="position:absolute;left:289px;top:76px;width:242px;height:1px;background:#fff"></div><div style="position:absolute;top:84px;font-size:12px;line-height:12px;color:#000;white-space:pre;letter-spacing:-0.247px;left:293px;">Create gate</div><svg style="left:518px;top:86px" width="4" height="7" shape-rendering="crispEdges"><path d="M0 0h1v1h1v1h1v1h1v1h-1v1h-1v1h-1v1h-1z" fill="#000"/></svg><div style="position:absolute;top:106px;font-size:12px;line-height:12px;color:#000;white-space:pre;letter-spacing:-0.272px;left:293px;">Show gates</div><svg style="left:518px;top:108px" width="4" height="7" shape-rendering="crispEdges"><path d="M0 0h1v1h1v1h1v1h1v1h-1v1h-1v1h-1v1h-1z" fill="#000"/></svg><div style="position:absolute;top:128px;font-size:12px;line-height:12px;color:#000;white-space:pre;left:293px;">Activate gate</div><svg style="left:518px;top:130px" width="4" height="7" shape-rendering="crispEdges"><path d="M0 0h1v1h1v1h1v1h1v1h-1v1h-1v1h-1v1h-1z" fill="#000"/></svg><div style="position:absolute;top:150px;font-size:12px;line-height:12px;color:#6d6d6d;white-space:pre;letter-spacing:-0.303px;left:293px;">Break Gate Link</div><div style="position:absolute;top:172px;font-size:12px;line-height:12px;color:#000;white-space:pre;letter-spacing:-0.156px;left:293px;">Show Quadrants</div><div style="position:absolute;top:194px;font-size:12px;line-height:12px;color:#6d6d6d;white-space:pre;letter-spacing:-0.153px;left:293px;">Convert Quads To Gates</div><svg style="left:518px;top:196px" width="4" height="7" shape-rendering="crispEdges"><path d="M0 0h1v1h1v1h1v1h1v1h-1v1h-1v1h-1v1h-1z" fill="#b0b0b0"/></svg><div style="position:absolute;top:216px;font-size:12px;line-height:12px;color:#000;white-space:pre;letter-spacing:-0.162px;left:293px;">Statistics</div><svg style="left:518px;top:218px" width="4" height="7" shape-rendering="crispEdges"><path d="M0 0h1v1h1v1h1v1h1v1h-1v1h-1v1h-1v1h-1z" fill="#000"/></svg><div style="position:absolute;left:289px;top:237px;width:242px;height:1px;background:#e0e0e0"></div><div style="position:absolute;left:289px;top:238px;width:242px;height:1px;background:#fff"></div><div style="position:absolute;top:246px;font-size:12px;line-height:12px;color:#000;white-space:pre;letter-spacing:-0.394px;left:293px;">Recreate Gate Text Boxes</div><svg style="left:518px;top:248px" width="4" height="7" shape-rendering="crispEdges"><path d="M0 0h1v1h1v1h1v1h1v1h-1v1h-1v1h-1v1h-1z" fill="#000"/></svg><div style="position:absolute;top:268px;font-size:12px;line-height:12px;color:#000;white-space:pre;letter-spacing:-0.317px;left:293px;">Recreate Quad Text Boxes</div><svg style="left:518px;top:270px" width="4" height="7" shape-rendering="crispEdges"><path d="M0 0h1v1h1v1h1v1h1v1h-1v1h-1v1h-1v1h-1z" fill="#000"/></svg><div style="position:absolute;left:289px;top:289px;width:242px;height:1px;background:#e0e0e0"></div><div style="position:absolute;left:289px;top:290px;width:242px;height:1px;background:#fff"></div><div style="position:absolute;top:298px;font-size:12px;line-height:12px;color:#000;white-space:pre;letter-spacing:0.084px;left:293px;">Compensation</div><svg style="left:518px;top:300px" width="4" height="7" shape-rendering="crispEdges"><path d="M0 0h1v1h1v1h1v1h1v1h-1v1h-1v1h-1v1h-1z" fill="#000"/></svg><div style="position:absolute;left:289px;top:319px;width:242px;height:1px;background:#e0e0e0"></div><div style="position:absolute;left:289px;top:320px;width:242px;height:1px;background:#fff"></div><div style="position:absolute;top:328px;font-size:12px;line-height:12px;color:#6d6d6d;white-space:pre;letter-spacing:-0.072px;left:293px;">Next</div><div style="position:absolute;top:328px;font-size:12px;line-height:12px;color:#6d6d6d;white-space:pre;right:875.00px;text-align:right;">Alt+Right</div><div style="position:absolute;top:350px;font-size:12px;line-height:12px;color:#000;white-space:pre;letter-spacing:-0.164px;left:293px;">Copy 2D Plot Data</div><svg style="left:518px;top:352px" width="4" height="7" shape-rendering="crispEdges"><path d="M0 0h1v1h1v1h1v1h1v1h-1v1h-1v1h-1v1h-1z" fill="#000"/></svg><div style="position:absolute;top:372px;font-size:12px;line-height:12px;color:#6d6d6d;white-space:pre;letter-spacing:-0.197px;left:293px;">Prev</div><div style="position:absolute;top:372px;font-size:12px;line-height:12px;color:#6d6d6d;white-space:pre;right:875.00px;text-align:right;">Alt+Left</div><div style="position:absolute;top:394px;font-size:12px;line-height:12px;color:#000;white-space:pre;letter-spacing:-0.174px;left:293px;">Change File</div><div style="position:absolute;top:394px;font-size:12px;line-height:12px;color:#000;white-space:pre;right:875.00px;text-align:right;">Ctrl+L</div><div style="position:absolute;left:289px;top:415px;width:242px;height:1px;background:#e0e0e0"></div><div style="position:absolute;left:289px;top:416px;width:242px;height:1px;background:#fff"></div><div style="position:absolute;top:424px;font-size:12px;line-height:12px;color:#000;white-space:pre;letter-spacing:0.438px;left:293px;">Cut</div><div style="position:absolute;top:424px;font-size:12px;line-height:12px;color:#000;white-space:pre;right:875.00px;text-align:right;">Ctrl+X</div><div style="position:absolute;top:446px;font-size:12px;line-height:12px;color:#000;white-space:pre;letter-spacing:0.146px;left:293px;">Copy</div><div style="position:absolute;top:446px;font-size:12px;line-height:12px;color:#000;white-space:pre;right:875.00px;text-align:right;">Ctrl+C</div><div style="position:absolute;top:468px;font-size:12px;line-height:12px;color:#000;white-space:pre;letter-spacing:-0.417px;left:293px;">Paste</div><div style="position:absolute;top:468px;font-size:12px;line-height:12px;color:#000;white-space:pre;right:875.00px;text-align:right;">Ctrl+V</div><div style="position:absolute;top:490px;font-size:12px;line-height:12px;color:#000;white-space:pre;letter-spacing:0.108px;left:293px;">Duplicate</div><div style="position:absolute;top:490px;font-size:12px;line-height:12px;color:#000;white-space:pre;right:875.00px;text-align:right;">Ctrl+D</div><div style="position:absolute;left:289px;top:511px;width:242px;height:1px;background:#e0e0e0"></div><div style="position:absolute;left:289px;top:512px;width:242px;height:1px;background:#fff"></div><div style="position:absolute;top:520px;font-size:12px;line-height:12px;color:#6d6d6d;white-space:pre;letter-spacing:0.068px;left:293px;">Magnify (Resolution)</div><div style="position:absolute;top:542px;font-size:12px;line-height:12px;color:#6d6d6d;white-space:pre;letter-spacing:0.050px;left:293px;">UnMagnify (Resolution)</div><div style="position:absolute;top:564px;font-size:12px;line-height:12px;color:#000;white-space:pre;letter-spacing:0.063px;left:293px;">Magnify (Axis)</div><div style="position:absolute;top:586px;font-size:12px;line-height:12px;color:#000;white-space:pre;letter-spacing:0.040px;left:293px;">UnMagnify (Axis)</div><div style="position:absolute;top:608px;font-size:12px;line-height:12px;color:#000;white-space:pre;letter-spacing:0.041px;left:293px;">Maximize</div><div style="position:absolute;top:608px;font-size:12px;line-height:12px;color:#000;white-space:pre;right:875.00px;text-align:right;">Ctrl+M</div><div style="position:absolute;top:630px;font-size:12px;line-height:12px;color:#000;white-space:pre;letter-spacing:-0.146px;left:293px;">Set As Default</div><div style="position:absolute;left:605px;top:30px;width:271px;height:250px;background:#f0f0f0;border:1px solid #979797;box-shadow:inset 0 0 0 1px #fcfcfc, 3px 3px 3px rgba(0,0,0,0.45)"></div><div style="position:absolute;left:634px;top:32px;width:1px;height:246px;background:#e2e3e3"></div><div style="position:absolute;left:635px;top:32px;width:1px;height:246px;background:#fff"></div><div style="position:absolute;left:608px;top:33px;width:265px;height:22px;border:1px solid #a8cbf3;border-radius:3px;background:linear-gradient(rgba(246,250,255,0.55),rgba(214,229,250,0.55));box-shadow:inset 0 0 0 1px rgba(255,255,255,0.45)"></div><div style="position:absolute;top:38px;font-size:12px;line-height:12px;color:#000;white-space:pre;letter-spacing:0.070px;left:640px;">Insert Token</div><div style="position:absolute;top:60px;font-size:12px;line-height:12px;color:#6d6d6d;white-space:pre;left:640px;">Insert Canned Comment</div><div style="position:absolute;top:82px;font-size:12px;line-height:12px;color:#6d6d6d;white-space:pre;letter-spacing:-0.083px;left:640px;">Insert Signature Table</div><div style="position:absolute;top:104px;font-size:12px;line-height:12px;color:#6d6d6d;white-space:pre;letter-spacing:0.018px;left:640px;">Insert Compensation Matrix</div><div style="position:absolute;left:636px;top:125px;width:237px;height:1px;background:#e0e0e0"></div><div style="position:absolute;left:636px;top:126px;width:237px;height:1px;background:#fff"></div><div style="position:absolute;top:134px;font-size:12px;line-height:12px;color:#000;white-space:pre;letter-spacing:0.164px;left:640px;">Format</div><div style="position:absolute;left:636px;top:155px;width:237px;height:1px;background:#e0e0e0"></div><div style="position:absolute;left:636px;top:156px;width:237px;height:1px;background:#fff"></div><div style="position:absolute;top:164px;font-size:12px;line-height:12px;color:#000;white-space:pre;letter-spacing:0.242px;left:640px;">Table</div><svg style="left:860px;top:166px" width="4" height="7" shape-rendering="crispEdges"><path d="M0 0h1v1h1v1h1v1h1v1h-1v1h-1v1h-1v1h-1z" fill="#000"/></svg><div style="position:absolute;left:636px;top:185px;width:237px;height:1px;background:#e0e0e0"></div><div style="position:absolute;left:636px;top:186px;width:237px;height:1px;background:#fff"></div><div style="position:absolute;top:194px;font-size:12px;line-height:12px;color:#000;white-space:pre;letter-spacing:0.438px;left:640px;">Cut</div><div style="position:absolute;top:194px;font-size:12px;line-height:12px;color:#000;white-space:pre;right:533.00px;text-align:right;">Ctrl+X</div><div style="position:absolute;top:216px;font-size:12px;line-height:12px;color:#000;white-space:pre;letter-spacing:0.271px;left:640px;">Copy</div><div style="position:absolute;top:216px;font-size:12px;line-height:12px;color:#000;white-space:pre;right:533.00px;text-align:right;">Ctrl+C</div><div style="position:absolute;top:238px;font-size:12px;line-height:12px;color:#6d6d6d;white-space:pre;letter-spacing:-0.317px;left:640px;">Paste</div><div style="position:absolute;top:238px;font-size:12px;line-height:12px;color:#6d6d6d;white-space:pre;right:533.00px;text-align:right;">Ctrl+V</div><div style="position:absolute;top:260px;font-size:12px;line-height:12px;color:#000;white-space:pre;letter-spacing:0.141px;left:640px;">Duplicate</div><div style="position:absolute;top:260px;font-size:12px;line-height:12px;color:#000;white-space:pre;right:533.00px;text-align:right;">Ctrl+D</div><div style="position:absolute;left:384px;top:51px;width:16px;height:16px;background:#fff"></div><svg style="left:384.5px;top:51.5px" width="16" height="16"><circle cx="8" cy="8" r="7.2" fill="#000"/><path d="M6.2 5.6 L8.6 3.9 L8.6 12.2" fill="none" stroke="#fff" stroke-width="1.5"/></svg><svg style="left:416px;top:58px" width="14" height="22"><path d="M0.5 0.5 L0.5 16.5 L4.5 12.8 L7.3 19.2 L9.6 18.2 L6.9 11.9 L11.8 11.9 Z" fill="#fff" stroke="#0a1a30" stroke-width="1" stroke-linejoin="miter"/></svg><div style="position:absolute;left:710px;top:36px;width:16px;height:15px;background:#fff"></div><svg style="left:710.3px;top:36.2px" width="16" height="16"><circle cx="8" cy="8" r="7.2" fill="#000"/><text x="8" y="12.2" text-anchor="middle" font-family="Liberation Sans" font-size="11.5" fill="#fff" stroke="#fff" stroke-width="0.35">2</text></svg><svg style="left:737px;top:46px" width="14" height="22"><path d="M0.5 0.5 L0.5 16.5 L4.5 12.8 L7.3 19.2 L9.6 18.2 L6.9 11.9 L11.8 11.9 Z" fill="#fff" stroke="#0a1a30" stroke-width="1" stroke-linejoin="miter"/></svg><div style="position:absolute;left:957px;top:11px;width:407px;height:458px;border-radius:7px;box-shadow:0 3px 12px 2px rgba(0,0,0,0.5), 0 1px 5px 1px rgba(0,0,0,0.45)"></div><div style="position:absolute;left:957px;top:11px;width:407px;height:458px;border-radius:7px;border:1px solid #2a3444;background:linear-gradient(#d9e9f9 0px,#d8e9f9 133px,#b6d6f8 136px);box-shadow:inset 0 0 0 1px rgba(255,255,255,0.75)"></div><div style="position:absolute;left:959px;top:13px;width:403px;height:27px;border-radius:6px 6px 0 0;background:linear-gradient(90deg,#d6e7f9 0%,#d0e3f8 22%,#bcdaf9 38%,#b8d8fa 55%,#c4dffa 75%,#d2e6fb 100%)"></div><div style="position:absolute;left:964px;top:40px;width:393px;height:423px;border:1px solid #6a7d92;background:#f0f0f0;box-shadow:inset 1px 1px 0 #fff"></div><div style="position:absolute;left:969px;top:45px;width:383px;height:383px;border:1px solid #6b6b6b;background:#fff"></div><div style="position:absolute;left:978px;top:54px;width:365px;height:22px;background:#eeeff3;border-bottom:1px solid #e3e4e8"></div><div style="position:absolute;top:60px;font-size:11.5px;line-height:11.5px;color:#000;white-space:pre;font-weight:bold;letter-spacing:-0.311px;left:984px;">Select Token Type</div><div style="position:absolute;top:87px;font-size:11.5px;line-height:11.5px;color:#000;white-space:pre;letter-spacing:0.186px;left:986px;">What type of token would you like to insert?</div><svg style="left:965px;top:18px" width="16" height="16"><path d="M0.3 0.3 Q8 3.6 15.7 0.3 Q12.4 8 15.7 15.7 Q8 12.4 0.3 15.7 Q3.6 8 0.3 0.3Z" fill="#4b2c9e"/><circle cx="8" cy="8" r="5.4" fill="#c8ecfb"/><circle cx="8" cy="8" r="4.3" fill="#6a4ab0"/><text x="7.8" y="11.8" text-anchor="middle" font-family="Liberation Sans" font-weight="bold" font-style="italic" font-size="10.5" fill="#d8323c" stroke="#5a1010" stroke-width="0.4">5</text></svg><div style="position:absolute;top:20px;font-size:12px;line-height:12px;color:#000;white-space:pre;letter-spacing:0.059px;left:986px;">Insert a Token</div><div style="position:absolute;left:1310px;top:11px;width:47px;height:20px;border:1px solid #5a2018;border-top:none;border-radius:0 0 4px 4px;background:linear-gradient(#eeb0a4 0%,#e3998a 45%,#c8432c 50%,#c94a33 75%,#de7a64 100%);box-shadow:inset 0 0 0 1px rgba(255,255,255,0.45)"></div><svg style="left:1328px;top:15px" width="14" height="12"><path d="M1.5 1.5h3.2l2.3 2.6 2.3-2.6h3.2l-3.8 4.5 3.8 4.5h-3.2l-2.3-2.6-2.3 2.6h-3.2l3.8-4.5z" fill="#f4f4f4" stroke="#3a4a66" stroke-width="1.1" stroke-linejoin="round"/></svg><div style="position:absolute;left:986px;top:106px;width:349px;height:313px;border:1px solid #828790;background:#fff;overflow:hidden"><div style="position:absolute;left:21px;top:1px;width:67px;height:16px;border:1px solid #84acdd;border-radius:2px;background:linear-gradient(#f2f7fd,#dce9f9)"></div><svg style="left:23px;top:1px" width="16" height="15" shape-rendering="crispEdges"><rect x="0" y="0" width="16" height="15" fill="#cacaca"/><rect x="1" y="1" width="14" height="13" fill="#5a5a5a"/><rect x="2" y="2" width="12" height="11" fill="#f4f5f7"/><rect x="2" y="7" width="12" height="5" fill="#e4e6ea"/><path d="M3 3h10v3h-1v-1h-1v-1h-2v7h1v1h-4v-1h1v-7h-2v1h-1v1h-1z" fill="#0a0a0a"/></svg><div style="position:absolute;top:4px;font-size:11.5px;line-height:11.5px;color:#000;white-space:pre;letter-spacing:0.015px;left:44px;">Statistic</div><svg style="left:23px;top:17px" width="16" height="15" shape-rendering="crispEdges"><rect x="0" y="0" width="16" height="15" fill="#cacaca"/><rect x="1" y="1" width="14" height="13" fill="#5a5a5a"/><rect x="2" y="2" width="12" height="11" fill="#f4f5f7"/><rect x="2" y="7" width="12" height="5" fill="#e4e6ea"/><path d="M3 3h10v3h-1v-1h-1v-1h-2v7h1v1h-4v-1h1v-7h-2v1h-1v1h-1z" fill="#0a0a0a"/></svg><div style="position:absolute;top:20px;font-size:11.5px;line-height:11.5px;color:#000;white-space:pre;letter-spacing:-0.093px;left:44px;">Keyword</div><svg style="left:23px;top:33px" width="16" height="15" shape-rendering="crispEdges"><rect x="0" y="0" width="16" height="15" fill="#cacaca"/><rect x="1" y="1" width="14" height="13" fill="#5a5a5a"/><rect x="2" y="2" width="12" height="11" fill="#f4f5f7"/><rect x="2" y="7" width="12" height="5" fill="#e4e6ea"/><path d="M3 3h10v3h-1v-1h-1v-1h-2v7h1v1h-4v-1h1v-7h-2v1h-1v1h-1z" fill="#0a0a0a"/></svg><div style="position:absolute;top:36px;font-size:11.5px;line-height:11.5px;color:#000;white-space:pre;letter-spacing:-0.073px;left:44px;">Statistic Classifier</div><svg style="left:23px;top:49px" width="17" height="15"><defs><linearGradient id="fg" x1="0" y1="0" x2="0" y2="1"><stop offset="0" stop-color="#fffbb8"/><stop offset="1" stop-color="#f6cf5c"/></linearGradient></defs><path d="M3.5 13.6 H16 V6.5 Z" fill="rgba(40,50,80,0.18)"/><path d="M0.5 12.5 V2.5 L1.5 1.5 H5.5 L6.5 3.5 H12.5 V12.5 Z" fill="#fbe07a" stroke="#c88c1c" stroke-width="1"/><rect x="1.5" y="2.5" width="4" height="2" fill="#fffbe0"/><rect x="6.5" y="4.5" width="5" height="1" fill="#fffbe0"/><path d="M2.5 5.5 H14.5 V12.5 H2.5 Z" fill="url(#fg)" stroke="#c88c1c" stroke-width="1"/><rect x="3" y="6" width="11" height="1" fill="#ffffff" opacity="0.8"/><rect x="13" y="6" width="1" height="6" fill="#e8a840" opacity="0.7"/></svg><div style="position:absolute;top:52px;font-size:11.5px;line-height:11.5px;color:#000;white-space:pre;letter-spacing:-0.039px;left:44px;">Layout</div><svg style="left:11px;top:53px" width="7" height="9"><path d="M0.5 0.5 L5.5 4.5 L0.5 8.5 Z" fill="none" stroke="#a6a6a6" stroke-width="1"/></svg><svg style="left:23px;top:65px" width="17" height="15"><defs><linearGradient id="fg" x1="0" y1="0" x2="0" y2="1"><stop offset="0" stop-color="#fffbb8"/><stop offset="1" stop-color="#f6cf5c"/></linearGradient></defs><path d="M3.5 13.6 H16 V6.5 Z" fill="rgba(40,50,80,0.18)"/><path d="M0.5 12.5 V2.5 L1.5 1.5 H5.5 L6.5 3.5 H12.5 V12.5 Z" fill="#fbe07a" stroke="#c88c1c" stroke-width="1"/><rect x="1.5" y="2.5" width="4" height="2" fill="#fffbe0"/><rect x="6.5" y="4.5" width="5" height="1" fill="#fffbe0"/><path d="M2.5 5.5 H14.5 V12.5 H2.5 Z" fill="url(#fg)" stroke="#c88c1c" stroke-width="1"/><rect x="3" y="6" width="11" height="1" fill="#ffffff" opacity="0.8"/><rect x="13" y="6" width="1" height="6" fill="#e8a840" opacity="0.7"/></svg><div style="position:absolute;top:68px;font-size:11.5px;line-height:11.5px;color:#000;white-space:pre;letter-spacing:-0.234px;left:44px;">Gate</div><svg style="left:11px;top:69px" width="7" height="9"><path d="M0.5 0.5 L5.5 4.5 L0.5 8.5 Z" fill="none" stroke="#a6a6a6" stroke-width="1"/></svg><svg style="left:23px;top:81px" width="17" height="15"><defs><linearGradient id="fg" x1="0" y1="0" x2="0" y2="1"><stop offset="0" stop-color="#fffbb8"/><stop offset="1" stop-color="#f6cf5c"/></linearGradient></defs><path d="M3.5 13.6 H16 V6.5 Z" fill="rgba(40,50,80,0.18)"/><path d="M0.5 12.5 V2.5 L1.5 1.5 H5.5 L6.5 3.5 H12.5 V12.5 Z" fill="#fbe07a" stroke="#c88c1c" stroke-width="1"/><rect x="1.5" y="2.5" width="4" height="2" fill="#fffbe0"/><rect x="6.5" y="4.5" width="5" height="1" fill="#fffbe0"/><path d="M2.5 5.5 H14.5 V12.5 H2.5 Z" fill="url(#fg)" stroke="#c88c1c" stroke-width="1"/><rect x="3" y="6" width="11" height="1" fill="#ffffff" opacity="0.8"/><rect x="13" y="6" width="1" height="6" fill="#e8a840" opacity="0.7"/></svg><div style="position:absolute;top:84px;font-size:11.5px;line-height:11.5px;color:#000;white-space:pre;letter-spacing:0.107px;left:44px;">Signature</div><svg style="left:11px;top:85px" width="7" height="9"><path d="M0.5 0.5 L5.5 4.5 L0.5 8.5 Z" fill="none" stroke="#a6a6a6" stroke-width="1"/></svg><svg style="left:23px;top:97px" width="17" height="15"><defs><linearGradient id="fg" x1="0" y1="0" x2="0" y2="1"><stop offset="0" stop-color="#fffbb8"/><stop offset="1" stop-color="#f6cf5c"/></linearGradient></defs><path d="M3.5 13.6 H16 V6.5 Z" fill="rgba(40,50,80,0.18)"/><path d="M0.5 12.5 V2.5 L1.5 1.5 H5.5 L6.5 3.5 H12.5 V12.5 Z" fill="#fbe07a" stroke="#c88c1c" stroke-width="1"/><rect x="1.5" y="2.5" width="4" height="2" fill="#fffbe0"/><rect x="6.5" y="4.5" width="5" height="1" fill="#fffbe0"/><path d="M2.5 5.5 H14.5 V12.5 H2.5 Z" fill="url(#fg)" stroke="#c88c1c" stroke-width="1"/><rect x="3" y="6" width="11" height="1" fill="#ffffff" opacity="0.8"/><rect x="13" y="6" width="1" height="6" fill="#e8a840" opacity="0.7"/></svg><div style="position:absolute;top:100px;font-size:11.5px;line-height:11.5px;color:#000;white-space:pre;letter-spacing:0.104px;left:44px;">Compensation</div><svg style="left:11px;top:101px" width="7" height="9"><path d="M0.5 0.5 L5.5 4.5 L0.5 8.5 Z" fill="none" stroke="#a6a6a6" stroke-width="1"/></svg><svg style="left:23px;top:113px" width="17" height="15"><defs><linearGradient id="fg" x1="0" y1="0" x2="0" y2="1"><stop offset="0" stop-color="#fffbb8"/><stop offset="1" stop-color="#f6cf5c"/></linearGradient></defs><path d="M3.5 13.6 H16 V6.5 Z" fill="rgba(40,50,80,0.18)"/><path d="M0.5 12.5 V2.5 L1.5 1.5 H5.5 L6.5 3.5 H12.5 V12.5 Z" fill="#fbe07a" stroke="#c88c1c" stroke-width="1"/><rect x="1.5" y="2.5" width="4" height="2" fill="#fffbe0"/><rect x="6.5" y="4.5" width="5" height="1" fill="#fffbe0"/><path d="M2.5 5.5 H14.5 V12.5 H2.5 Z" fill="url(#fg)" stroke="#c88c1c" stroke-width="1"/><rect x="3" y="6" width="11" height="1" fill="#ffffff" opacity="0.8"/><rect x="13" y="6" width="1" height="6" fill="#e8a840" opacity="0.7"/></svg><div style="position:absolute;top:116px;font-size:11.5px;line-height:11.5px;color:#000;white-space:pre;letter-spacing:-0.169px;left:44px;">Batch Processing</div><svg style="left:11px;top:117px" width="7" height="9"><path d="M0.5 0.5 L5.5 4.5 L0.5 8.5 Z" fill="none" stroke="#a6a6a6" stroke-width="1"/></svg><svg style="left:23px;top:129px" width="17" height="15"><defs><linearGradient id="fg" x1="0" y1="0" x2="0" y2="1"><stop offset="0" stop-color="#fffbb8"/><stop offset="1" stop-color="#f6cf5c"/></linearGradient></defs><path d="M3.5 13.6 H16 V6.5 Z" fill="rgba(40,50,80,0.18)"/><path d="M0.5 12.5 V2.5 L1.5 1.5 H5.5 L6.5 3.5 H12.5 V12.5 Z" fill="#fbe07a" stroke="#c88c1c" stroke-width="1"/><rect x="1.5" y="2.5" width="4" height="2" fill="#fffbe0"/><rect x="6.5" y="4.5" width="5" height="1" fill="#fffbe0"/><path d="M2.5 5.5 H14.5 V12.5 H2.5 Z" fill="url(#fg)" stroke="#c88c1c" stroke-width="1"/><rect x="3" y="6" width="11" height="1" fill="#ffffff" opacity="0.8"/><rect x="13" y="6" width="1" height="6" fill="#e8a840" opacity="0.7"/></svg><div style="position:absolute;top:132px;font-size:11.5px;line-height:11.5px;color:#000;white-space:pre;letter-spacing:-0.591px;left:44px;">System</div><svg style="left:11px;top:133px" width="7" height="9"><path d="M0.5 0.5 L5.5 4.5 L0.5 8.5 Z" fill="none" stroke="#a6a6a6" stroke-width="1"/></svg><svg style="left:23px;top:145px" width="17" height="15"><defs><linearGradient id="fg" x1="0" y1="0" x2="0" y2="1"><stop offset="0" stop-color="#fffbb8"/><stop offset="1" stop-color="#f6cf5c"/></linearGradient></defs><path d="M3.5 13.6 H16 V6.5 Z" fill="rgba(40,50,80,0.18)"/><path d="M0.5 12.5 V2.5 L1.5 1.5 H5.5 L6.5 3.5 H12.5 V12.5 Z" fill="#fbe07a" stroke="#c88c1c" stroke-width="1"/><rect x="1.5" y="2.5" width="4" height="2" fill="#fffbe0"/><rect x="6.5" y="4.5" width="5" height="1" fill="#fffbe0"/><path d="M2.5 5.5 H14.5 V12.5 H2.5 Z" fill="url(#fg)" stroke="#c88c1c" stroke-width="1"/><rect x="3" y="6" width="11" height="1" fill="#ffffff" opacity="0.8"/><rect x="13" y="6" width="1" height="6" fill="#e8a840" opacity="0.7"/></svg><div style="position:absolute;top:148px;font-size:11.5px;line-height:11.5px;color:#000;white-space:pre;letter-spacing:0.118px;left:44px;">Plot</div><svg style="left:11px;top:149px" width="7" height="9"><path d="M0.5 0.5 L5.5 4.5 L0.5 8.5 Z" fill="none" stroke="#a6a6a6" stroke-width="1"/></svg><svg style="left:23px;top:161px" width="16" height="15" shape-rendering="crispEdges"><rect x="0" y="0" width="16" height="15" fill="#cacaca"/><rect x="1" y="1" width="14" height="13" fill="#5a5a5a"/><rect x="2" y="2" width="12" height="11" fill="#f4f5f7"/><rect x="2" y="7" width="12" height="5" fill="#e4e6ea"/><path d="M3 3h10v3h-1v-1h-1v-1h-2v7h1v1h-4v-1h1v-7h-2v1h-1v1h-1z" fill="#0a0a0a"/></svg><div style="position:absolute;top:164px;font-size:11.5px;line-height:11.5px;color:#000;white-space:pre;letter-spacing:-0.228px;left:44px;">Data Parameter</div><svg style="left:23px;top:177px" width="16" height="15" shape-rendering="crispEdges"><rect x="0" y="0" width="16" height="15" fill="#cacaca"/><rect x="1" y="1" width="14" height="13" fill="#5a5a5a"/><rect x="2" y="2" width="12" height="11" fill="#f4f5f7"/><rect x="2" y="7" width="12" height="5" fill="#e4e6ea"/><path d="M3 3h10v3h-1v-1h-1v-1h-2v7h1v1h-4v-1h1v-7h-2v1h-1v1h-1z" fill="#0a0a0a"/></svg><div style="position:absolute;top:180px;font-size:11.5px;line-height:11.5px;color:#000;white-space:pre;letter-spacing:-0.154px;left:44px;">Custom</div><svg style="left:10px;top:182px" width="7" height="7"><path d="M6 0.5 L6 6 L0.5 6 Z" fill="#404040" stroke="#404040" stroke-width="1"/></svg><svg style="left:42px;top:193px" width="16" height="15" shape-rendering="crispEdges"><rect x="0" y="0" width="16" height="15" fill="#cacaca"/><rect x="1" y="1" width="14" height="13" fill="#5a5a5a"/><rect x="2" y="2" width="12" height="11" fill="#f4f5f7"/><rect x="2" y="7" width="12" height="5" fill="#e4e6ea"/><path d="M3 3h10v3h-1v-1h-1v-1h-2v7h1v1h-4v-1h1v-7h-2v1h-1v1h-1z" fill="#0a0a0a"/></svg><div style="position:absolute;top:196px;font-size:11.5px;line-height:11.5px;color:#000;white-space:pre;letter-spacing:-0.018px;left:63px;">LogMedM1</div><svg style="left:42px;top:209px" width="16" height="15" shape-rendering="crispEdges"><rect x="0" y="0" width="16" height="15" fill="#cacaca"/><rect x="1" y="1" width="14" height="13" fill="#5a5a5a"/><rect x="2" y="2" width="12" height="11" fill="#f4f5f7"/><rect x="2" y="7" width="12" height="5" fill="#e4e6ea"/><path d="M3 3h10v3h-1v-1h-1v-1h-2v7h1v1h-4v-1h1v-7h-2v1h-1v1h-1z" fill="#0a0a0a"/></svg><div style="position:absolute;top:212px;font-size:11.5px;line-height:11.5px;color:#000;white-space:pre;letter-spacing:0.019px;left:63px;">LogMedM2</div><svg style="left:42px;top:225px" width="16" height="15" shape-rendering="crispEdges"><rect x="0" y="0" width="16" height="15" fill="#cacaca"/><rect x="1" y="1" width="14" height="13" fill="#5a5a5a"/><rect x="2" y="2" width="12" height="11" fill="#f4f5f7"/><rect x="2" y="7" width="12" height="5" fill="#e4e6ea"/><path d="M3 3h10v3h-1v-1h-1v-1h-2v7h1v1h-4v-1h1v-7h-2v1h-1v1h-1z" fill="#0a0a0a"/></svg><div style="position:absolute;top:228px;font-size:11.5px;line-height:11.5px;color:#000;white-space:pre;letter-spacing:0.019px;left:63px;">LogMedM3</div><svg style="left:42px;top:241px" width="16" height="15" shape-rendering="crispEdges"><rect x="0" y="0" width="16" height="15" fill="#cacaca"/><rect x="1" y="1" width="14" height="13" fill="#5a5a5a"/><rect x="2" y="2" width="12" height="11" fill="#f4f5f7"/><rect x="2" y="7" width="12" height="5" fill="#e4e6ea"/><path d="M3 3h10v3h-1v-1h-1v-1h-2v7h1v1h-4v-1h1v-7h-2v1h-1v1h-1z" fill="#0a0a0a"/></svg><div style="position:absolute;top:244px;font-size:11.5px;line-height:11.5px;color:#000;white-space:pre;letter-spacing:0.019px;left:63px;">LogMedM4</div><svg style="left:42px;top:257px" width="16" height="15" shape-rendering="crispEdges"><rect x="0" y="0" width="16" height="15" fill="#cacaca"/><rect x="1" y="1" width="14" height="13" fill="#5a5a5a"/><rect x="2" y="2" width="12" height="11" fill="#f4f5f7"/><rect x="2" y="7" width="12" height="5" fill="#e4e6ea"/><path d="M3 3h10v3h-1v-1h-1v-1h-2v7h1v1h-4v-1h1v-7h-2v1h-1v1h-1z" fill="#0a0a0a"/></svg><div style="position:absolute;top:260px;font-size:11.5px;line-height:11.5px;color:#000;white-space:pre;letter-spacing:0.019px;left:63px;">LogMedM5</div><svg style="left:42px;top:273px" width="16" height="15" shape-rendering="crispEdges"><rect x="0" y="0" width="16" height="15" fill="#cacaca"/><rect x="1" y="1" width="14" height="13" fill="#5a5a5a"/><rect x="2" y="2" width="12" height="11" fill="#f4f5f7"/><rect x="2" y="7" width="12" height="5" fill="#e4e6ea"/><path d="M3 3h10v3h-1v-1h-1v-1h-2v7h1v1h-4v-1h1v-7h-2v1h-1v1h-1z" fill="#0a0a0a"/></svg><div style="position:absolute;top:276px;font-size:11.5px;line-height:11.5px;color:#000;white-space:pre;letter-spacing:-0.484px;left:63px;">LogMESF-M1</div><svg style="left:42px;top:289px" width="16" height="15" shape-rendering="crispEdges"><rect x="0" y="0" width="16" height="15" fill="#cacaca"/><rect x="1" y="1" width="14" height="13" fill="#5a5a5a"/><rect x="2" y="2" width="12" height="11" fill="#f4f5f7"/><rect x="2" y="7" width="12" height="5" fill="#e4e6ea"/><path d="M3 3h10v3h-1v-1h-1v-1h-2v7h1v1h-4v-1h1v-7h-2v1h-1v1h-1z" fill="#0a0a0a"/></svg><div style="position:absolute;top:292px;font-size:11.5px;line-height:11.5px;color:#000;white-space:pre;letter-spacing:-0.414px;left:63px;">LogMESF-M2</div><svg style="left:42px;top:305px" width="16" height="15" shape-rendering="crispEdges"><rect x="0" y="0" width="16" height="15" fill="#cacaca"/><rect x="1" y="1" width="14" height="13" fill="#5a5a5a"/><rect x="2" y="2" width="12" height="11" fill="#f4f5f7"/><rect x="2" y="7" width="12" height="5" fill="#e4e6ea"/><path d="M3 3h10v3h-1v-1h-1v-1h-2v7h1v1h-4v-1h1v-7h-2v1h-1v1h-1z" fill="#0a0a0a"/></svg><div style="position:absolute;top:308px;font-size:11.5px;line-height:11.5px;color:#000;white-space:pre;letter-spacing:-0.414px;left:63px;">LogMESF-M3</div><svg style="left:0;top:0" width="347" height="311" shape-rendering="crispEdges"><g fill="#8a8a8a"><rect x="14" y="9" width="1" height="1"/><rect x="16" y="9" width="1" height="1"/><rect x="18" y="9" width="1" height="1"/><rect x="20" y="9" width="1" height="1"/><rect x="22" y="9" width="1" height="1"/><rect x="14" y="25" width="1" height="1"/><rect x="16" y="25" width="1" height="1"/><rect x="18" y="25" width="1" height="1"/><rect x="20" y="25" width="1" height="1"/><rect x="22" y="25" width="1" height="1"/><rect x="14" y="41" width="1" height="1"/><rect x="16" y="41" width="1" height="1"/><rect x="18" y="41" width="1" height="1"/><rect x="20" y="41" width="1" height="1"/><rect x="22" y="41" width="1" height="1"/><rect x="19" y="57" width="1" height="1"/><rect x="21" y="57" width="1" height="1"/><rect x="19" y="73" width="1" height="1"/><rect x="21" y="73" width="1" height="1"/><rect x="19" y="89" width="1" height="1"/><rect x="21" y="89" width="1" height="1"/><rect x="19" y="105" width="1" height="1"/><rect x="21" y="105" width="1" height="1"/><rect x="19" y="121" width="1" height="1"/><rect x="21" y="121" width="1" height="1"/><rect x="19" y="137" width="1" height="1"/><rect x="21" y="137" width="1" height="1"/><rect x="19" y="153" width="1" height="1"/><rect x="21" y="153" width="1" height="1"/><rect x="14" y="169" width="1" height="1"/><rect x="16" y="169" width="1" height="1"/><rect x="18" y="169" width="1" height="1"/><rect x="20" y="169" width="1" height="1"/><rect x="22" y="169" width="1" height="1"/><rect x="18" y="185" width="1" height="1"/><rect x="20" y="185" width="1" height="1"/><rect x="22" y="185" width="1" height="1"/><rect x="33" y="201" width="1" height="1"/><rect x="35" y="201" width="1" height="1"/><rect x="37" y="201" width="1" height="1"/><rect x="39" y="201" width="1" height="1"/><rect x="41" y="201" width="1" height="1"/><rect x="33" y="217" width="1" height="1"/><rect x="35" y="217" width="1" height="1"/><rect x="37" y="217" width="1" height="1"/><rect x="39" y="217" width="1" height="1"/><rect x="41" y="217" width="1" height="1"/><rect x="33" y="233" width="1" height="1"/><rect x="35" y="233" width="1" height="1"/><rect x="37" y="233" width="1" height="1"/><rect x="39" y="233" width="1" height="1"/><rect x="41" y="233" width="1" height="1"/><rect x="33" y="249" width="1" height="1"/><rect x="35" y="249" width="1" height="1"/><rect x="37" y="249" width="1" height="1"/><rect x="39" y="249" width="1" height="1"/><rect x="41" y="249" width="1" height="1"/><rect x="33" y="265" width="1" height="1"/><rect x="35" y="265" width="1" height="1"/><rect x="37" y="265" width="1" height="1"/><rect x="39" y="265" width="1" height="1"/><rect x="41" y="265" width="1" height="1"/><rect x="33" y="281" width="1" height="1"/><rect x="35" y="281" width="1" height="1"/><rect x="37" y="281" width="1" height="1"/><rect x="39" y="281" width="1" height="1"/><rect x="41" y="281" width="1" height="1"/><rect x="33" y="297" width="1" height="1"/><rect x="35" y="297" width="1" height="1"/><rect x="37" y="297" width="1" height="1"/><rect x="39" y="297" width="1" height="1"/><rect x="41" y="297" width="1" height="1"/><rect x="33" y="313" width="1" height="1"/><rect x="35" y="313" width="1" height="1"/><rect x="37" y="313" width="1" height="1"/><rect x="39" y="313" width="1" height="1"/><rect x="41" y="313" width="1" height="1"/><rect x="12" y="9" width="1" height="1"/><rect x="12" y="11" width="1" height="1"/><rect x="12" y="13" width="1" height="1"/><rect x="12" y="15" width="1" height="1"/><rect x="12" y="17" width="1" height="1"/><rect x="12" y="19" width="1" height="1"/><rect x="12" y="21" width="1" height="1"/><rect x="12" y="23" width="1" height="1"/><rect x="12" y="25" width="1" height="1"/><rect x="12" y="27" width="1" height="1"/><rect x="12" y="29" width="1" height="1"/><rect x="12" y="31" width="1" height="1"/><rect x="12" y="33" width="1" height="1"/><rect x="12" y="35" width="1" height="1"/><rect x="12" y="37" width="1" height="1"/><rect x="12" y="39" width="1" height="1"/><rect x="12" y="41" width="1" height="1"/><rect x="12" y="43" width="1" height="1"/><rect x="12" y="45" width="1" height="1"/><rect x="12" y="47" width="1" height="1"/><rect x="12" y="161" width="1" height="1"/><rect x="12" y="163" width="1" height="1"/><rect x="12" y="165" width="1" height="1"/><rect x="12" y="167" width="1" height="1"/><rect x="12" y="169" width="1" height="1"/><rect x="12" y="171" width="1" height="1"/><rect x="12" y="173" width="1" height="1"/><rect x="12" y="175" width="1" height="1"/><rect x="31" y="193" width="1" height="1"/><rect x="31" y="195" width="1" height="1"/><rect x="31" y="197" width="1" height="1"/><rect x="31" y="199" width="1" height="1"/><rect x="31" y="201" width="1" height="1"/><rect x="31" y="203" width="1" height="1"/><rect x="31" y="205" width="1" height="1"/><rect x="31" y="207" width="1" height="1"/><rect x="31" y="209" width="1" height="1"/><rect x="31" y="211" width="1" height="1"/><rect x="31" y="213" width="1" height="1"/><rect x="31" y="215" width="1" height="1"/><rect x="31" y="217" width="1" height="1"/><rect x="31" y="219" width="1" height="1"/><rect x="31" y="221" width="1" height="1"/><rect x="31" y="223" width="1" height="1"/><rect x="31" y="225" width="1" height="1"/><rect x="31" y="227" width="1" height="1"/><rect x="31" y="229" width="1" height="1"/><rect x="31" y="231" width="1" height="1"/><rect x="31" y="233" width="1" height="1"/><rect x="31" y="235" width="1" height="1"/><rect x="31" y="237" width="1" height="1"/><rect x="31" y="239" width="1" height="1"/><rect x="31" y="241" width="1" height="1"/><rect x="31" y="243" width="1" height="1"/><rect x="31" y="245" width="1" height="1"/><rect x="31" y="247" width="1" height="1"/><rect x="31" y="249" width="1" height="1"/><rect x="31" y="251" width="1" height="1"/><rect x="31" y="253" width="1" height="1"/><rect x="31" y="255" width="1" height="1"/><rect x="31" y="257" width="1" height="1"/><rect x="31" y="259" width="1" height="1"/><rect x="31" y="261" width="1" height="1"/><rect x="31" y="263" width="1" height="1"/><rect x="31" y="265" width="1" height="1"/><rect x="31" y="267" width="1" height="1"/><rect x="31" y="269" width="1" height="1"/><rect x="31" y="271" width="1" height="1"/><rect x="31" y="273" width="1" height="1"/><rect x="31" y="275" width="1" height="1"/><rect x="31" y="277" width="1" height="1"/><rect x="31" y="279" width="1" height="1"/><rect x="31" y="281" width="1" height="1"/><rect x="31" y="283" width="1" height="1"/><rect x="31" y="285" width="1" height="1"/><rect x="31" y="287" width="1" height="1"/><rect x="31" y="289" width="1" height="1"/><rect x="31" y="291" width="1" height="1"/><rect x="31" y="293" width="1" height="1"/><rect x="31" y="295" width="1" height="1"/><rect x="31" y="297" width="1" height="1"/><rect x="31" y="299" width="1" height="1"/><rect x="31" y="301" width="1" height="1"/><rect x="31" y="303" width="1" height="1"/><rect x="31" y="305" width="1" height="1"/><rect x="31" y="307" width="1" height="1"/><rect x="31" y="309" width="1" height="1"/><rect x="31" y="311" width="1" height="1"/></g></svg><div style="position:absolute;left:330px;top:1px;width:16px;height:309px;background:#f0f0f0"></div><svg style="left:330px;top:1px" width="16" height="309" shape-rendering="crispEdges"><path d="M5 11h7v-1h-1v-1h-1v-1h-1v-1h-1v1h-1v1h-1v1h-1v1h-1z" fill="#303030"/><path d="M5 299h7v1h-1v1h-1v1h-1v1h-1v-1h-1v-1h-1v-1h-1z" fill="#303030"/></svg><div style="position:absolute;left:330px;top:19px;width:15px;height:236px;border:1px solid #979797;border-radius:3px;background:linear-gradient(90deg,#f4f4f4 0%,#ececec 45%,#dadada 50%,#cfcfcf 100%);box-shadow:inset 0 0 0 1px rgba(255,255,255,0.7)"></div><svg style="left:330px;top:133px" width="16" height="9" shape-rendering="crispEdges"><g fill="#5a5a5a"><rect x="4" y="1" width="7" height="1"/><rect x="4" y="3" width="7" height="1"/><rect x="4" y="5" width="7" height="1"/><rect x="4" y="7" width="7" height="1"/></g></svg></div><div style="position:absolute;left:1186px;top:434px;width:73px;height:23px;border:1px solid #3c7fb1;border-radius:3px;background:linear-gradient(#e5f4fc 0%,#d4edfb 50%,#bfe3f7 51%,#a9daf4 100%);box-shadow:inset 0 0 0 1px #48dbfa, inset 0 0 0 2px rgba(255,255,255,0.35)"></div><div style="position:absolute;top:441px;font-size:11.5px;line-height:11.5px;color:#000;white-space:pre;letter-spacing:0.139px;left:1208px;">Insert</div><div style="position:absolute;left:1270px;top:434px;width:73px;height:23px;border:1px solid #707070;border-radius:3px;background:linear-gradient(#f2f2f2 0%,#ebebeb 50%,#dddddd 51%,#cfcfcf 100%);box-shadow:inset 0 0 0 1px rgba(255,255,255,0.8)"></div><div style="position:absolute;top:441px;font-size:11.5px;line-height:11.5px;color:#000;white-space:pre;letter-spacing:-0.369px;left:1290px;">Cancel</div><svg style="left:1079.3px;top:107.3px" width="16" height="16"><circle cx="8" cy="8" r="7.2" fill="#000"/><text x="8" y="12.2" text-anchor="middle" font-family="Liberation Sans" font-size="11.5" fill="#fff" stroke="#fff" stroke-width="0.35">3</text></svg></body></html>
